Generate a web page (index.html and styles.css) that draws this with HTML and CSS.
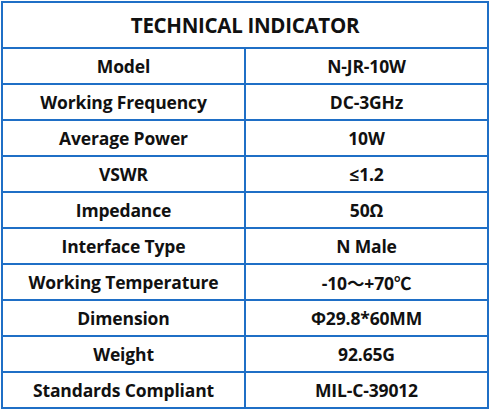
FILE: index.html
```html
<!DOCTYPE html>
<html lang="en">
    <head>
        <meta charset="UTF-8">
        <meta name="viewport" content="width=device-width, initial-scale=1.0">
        <title>Technical Indicator</title>
        <link rel="stylesheet" href="styles.css">
    </head>
    <body>
        <table class="spec">
            <tr>
                <th colspan="2" class="title">TECHNICAL INDICATOR</th>
            </tr>
            <tr><td>Model</td><td>N-JR-10W</td></tr>
            <tr><td>Working Frequency</td><td>DC-3GHz</td></tr>
            <tr><td>Average Power</td><td>10W</td></tr>
            <tr><td>VSWR</td><td>≤1.2</td></tr>
            <tr><td>Impedance</td><td>50Ω</td></tr>
            <tr><td>Interface Type</td><td>N Male</td></tr>
            <tr><td>Working Temperature</td><td>-10～+70℃</td></tr>
            <tr><td>Dimension</td><td>Φ29.8*60MM</td></tr>
            <tr><td>Weight</td><td>92.65G</td></tr>
            <tr><td>Standards Compliant</td><td>MIL-C-39012</td></tr>
        </table>
    </body>
</html>
```

FILE: styles.css
```css
body {
    margin: 0;
    padding: 1px 1px 0 1px;
    background-color: #fff;
    font-family: "Open Sans", "Noto Sans CJK SC", sans-serif;
}

.spec {
    width: 488px;
    border-collapse: collapse;
    table-layout: fixed;
    color: #111;
}

.spec th,
.spec td {
    border: 2px solid #1f6fc6;
    text-align: center;
    font-weight: bold;
    padding: 0;
}

.spec td {
    height: 34px;
    font-size: 17.5px;
    letter-spacing: -0.15px;
}

.spec .title {
    height: 44px;
    font-size: 20.5px;
    letter-spacing: -0.3px;
}
```
